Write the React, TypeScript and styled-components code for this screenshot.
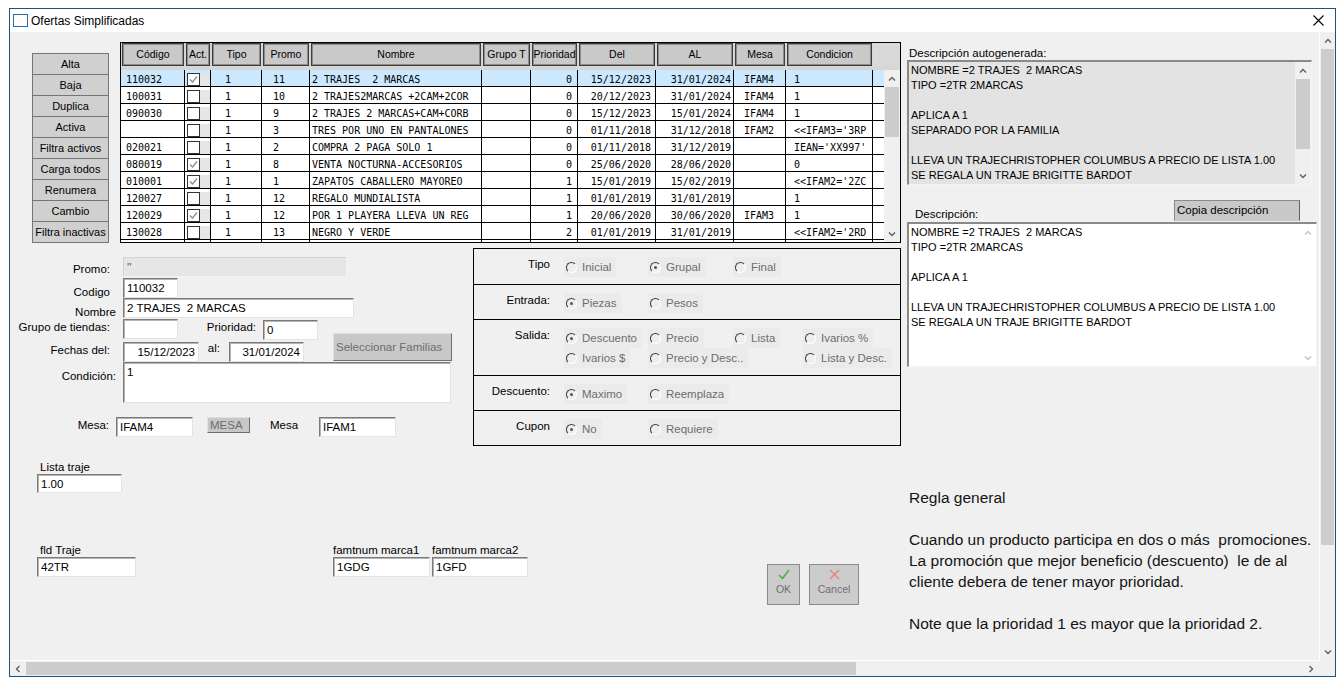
import React from 'react';
import styled, { createGlobalStyle } from 'styled-components';

const UI = '"Liberation Sans", Arial, sans-serif';
const MONO = '"DejaVu Sans Mono", "Liberation Mono", monospace';

const GlobalStyle = createGlobalStyle`
  html, body { margin: 0; padding: 0; background: #ffffff; }
  body { font-family: ${UI}; font-size: 11.5px; color: #000; }
  #root { padding: 8px 0 0 9px; }
  * { box-sizing: border-box; }
`;

const Window = styled.div`
  width: 1327px;
  height: 669px;
  border: 1px solid #1d5181;
  background: #f0f0f0;
  display: flex;
  flex-direction: column;
  overflow: hidden;
`;

const TitleBar = styled.div`
  height: 23px;
  flex-shrink: 0;
  background: #fff;
  display: flex;
  align-items: center;
  padding: 0 11px 0 3px;
`;

const TitleIcon = styled.span`
  width: 15px;
  height: 13px;
  border: 1px solid #2a6bb0;
  background: #fff;
  margin-right: 3px;
`;

const TitleText = styled.span`
  flex: 1;
  font-size: 12px;
`;

const Client = styled.div`
  flex: 1;
  min-height: 0;
  display: grid;
  grid-template-columns: 1fr 16px;
  grid-template-rows: 1fr 16px;
`;

const Content = styled.div`
  display: grid;
  grid-template-columns: 897px 1fr;
  overflow: hidden;
  min-height: 0;
`;

/* ---------- scrollbars ---------- */

const VScroll = styled.div`
  display: flex;
  flex-direction: column;
  background: #f0f0f0;
  border-left: 1px solid #fff;
`;

const HScroll = styled.div`
  display: flex;
  background: #f0f0f0;
  border-top: 1px solid #fff;
`;

const Corner = styled.div`
  background: #f0f0f0;
`;

const ArrowBox = styled.div<{ $w?: number; $h?: number }>`
  width: ${(p) => (p.$w ? `${p.$w}px` : 'auto')};
  height: ${(p) => (p.$h ? `${p.$h}px` : 'auto')};
  flex-shrink: 0;
  display: flex;
  align-items: center;
  justify-content: center;
`;

const Thumb = styled.div<{ $size: number; $vertical?: boolean }>`
  background: #cdcdcd;
  flex-shrink: 0;
  ${(p) =>
    p.$vertical
      ? `height: ${p.$size}px; margin: 0 1px;`
      : `width: ${p.$size}px; margin: 1px 0;`}
`;

const Track = styled.div`
  flex: 1;
`;

type Dir = 'up' | 'down' | 'left' | 'right';

function Chevron({ dir, color = '#606060' }: { dir: Dir; color?: string }) {
  const pts = {
    up: '1,5.5 4,2.5 7,5.5',
    down: '1,2.5 4,5.5 7,2.5',
    left: '5.5,1 2.5,4 5.5,7',
    right: '2.5,1 5.5,4 2.5,7',
  }[dir];
  return (
    <svg width="8" height="8" viewBox="0 0 8 8">
      <polyline points={pts} fill="none" stroke={color} strokeWidth="1.4" />
    </svg>
  );
}

/* ---------- left pane ---------- */

const LeftPane = styled.div`
  display: flex;
  flex-direction: column;
`;

const TopRow = styled.div`
  display: flex;
  align-items: flex-start;
  gap: 11px;
  padding: 10px 0 0 22px;
`;

const SideButtons = styled.div`
  width: 77px;
  margin-top: 11px;
  display: flex;
  flex-direction: column;
`;

const SideButton = styled.div`
  height: 22px;
  border: 1px solid #767676;
  background: #d0d0d0;
  text-align: center;
  font-size: 11px;
  line-height: 20px;
  & + & {
    margin-top: -1px;
  }
`;

const cols = [
  { w: 64, title: 'Código', align: 'left', pad: 5 },
  { w: 26, title: 'Act.', align: 'left', pad: 2 },
  { w: 51, title: 'Tipo', align: 'left', pad: 14 },
  { w: 48, title: 'Promo', align: 'left', pad: 11 },
  { w: 172, title: 'Nombre', align: 'left', pad: 2 },
  { w: 49, title: 'Grupo T', align: 'left', pad: 2 },
  { w: 47, title: 'Prioridad', align: 'right', pad: 5 },
  { w: 78, title: 'Del', align: 'right', pad: 4 },
  { w: 78, title: 'AL', align: 'right', pad: 2 },
  { w: 52, title: 'Mesa', align: 'left', pad: 10 },
  { w: 87, title: 'Condicion', align: 'left', pad: 8 },
];

const template = cols.map((c) => `${c.w}px`).join(' ') + ' 1fr';

type Row = [string, boolean, string, string, string, string, string, string, string, string, string];

const rows: Row[] = [
  ['110032', true, '1', '11', '2 TRAJES  2 MARCAS', '', '0', '15/12/2023', '31/01/2024', 'IFAM4', '1'],
  ['100031', false, '1', '10', '2 TRAJES2MARCAS +2CAM+2COR', '', '0', '20/12/2023', '31/01/2024', 'IFAM4', '1'],
  ['090030', false, '1', '9', '2 TRAJES 2 MARCAS+CAM+CORB', '', '0', '15/12/2023', '15/01/2024', 'IFAM4', '1'],
  ['', false, '1', '3', 'TRES POR UNO EN PANTALONES', '', '0', '01/11/2018', '31/12/2018', 'IFAM2', "<<IFAM3='3RP"],
  ['020021', false, '1', '2', 'COMPRA 2 PAGA SOLO 1', '', '0', '01/11/2018', '31/12/2019', '', "IEAN='XX997'"],
  ['080019', true, '1', '8', 'VENTA NOCTURNA-ACCESORIOS', '', '0', '25/06/2020', '28/06/2020', '', '0'],
  ['010001', true, '1', '1', 'ZAPATOS CABALLERO MAYOREO', '', '1', '15/01/2019', '15/02/2019', '', "<<IFAM2='2ZC"],
  ['120027', false, '1', '12', 'REGALO MUNDIALISTA', '', '1', '01/01/2019', '31/01/2019', '', '1'],
  ['120029', true, '1', '12', 'POR 1 PLAYERA LLEVA UN REG', '', '1', '20/06/2020', '30/06/2020', 'IFAM3', '1'],
  ['130028', false, '1', '13', 'NEGRO Y VERDE', '', '2', '01/01/2019', '31/01/2019', '', "<<IFAM2='2RD"],
  ['', false, '', '', '', '', '', '', '', '', ''],
];

const GridBox = styled.div`
  width: 781px;
  height: 201px;
  border: 1px solid #000;
  display: flex;
  flex-direction: column;
  overflow: hidden;
  background: #f0f0f0;
`;

const GridHeader = styled.div`
  height: 27px;
  flex-shrink: 0;
  display: grid;
  grid-template-columns: ${template} 16px;
  align-items: start;
  background: #d6d6d6;
`;

const HeaderCell = styled.div`
  height: 23px;
  margin: 0 1px;
  border: 1px solid #3c3c3c;
  box-shadow: inset 1px 1px 0 #8c8c8c, inset -1px -1px 0 #8c8c8c;
  background: #c9c9c9;
  font-size: 10.5px;
  line-height: 21px;
  text-align: center;
  white-space: nowrap;
  overflow: hidden;
`;

const HeaderFill = styled.div`
  height: 23px;
  background: #d9d9d9;
`;

const GridBody = styled.div`
  flex: 1;
  min-height: 0;
  display: flex;
`;

const RowsArea = styled.div`
  flex: 1;
  overflow: hidden;
  background: #fff;
`;

const DataRow = styled.div<{ $sel?: boolean }>`
  height: 17px;
  display: grid;
  grid-template-columns: ${template};
  border-bottom: 1px solid #000;
  background: ${(p) => (p.$sel ? '#cce8ff' : '#fff')};
`;

const Cell = styled.div<{ $align: string; $pad: number }>`
  border-right: 1px solid #000;
  overflow: hidden;
  white-space: pre;
  font-family: ${MONO};
  font-size: 10px;
  line-height: 17px;
  padding-top: 1px;
  text-align: ${(p) => p.$align};
  ${(p) => (p.$align === 'right' ? `padding-right: ${p.$pad}px;` : `padding-left: ${p.$pad}px;`)}
`;

const CheckWrap = styled.div`
  display: flex;
  margin-top: 2px;
`;

const CheckBox = styled.span`
  width: 13px;
  height: 13px;
  border: 1px solid #333;
  background: #fff;
  display: flex;
  align-items: center;
  justify-content: center;
`;

const CheckStrip = styled.span`
  width: 10px;
  height: 13px;
  background: #e6e6e6;
`;

const GridScroll = styled.div`
  width: 16px;
  display: flex;
  flex-direction: column;
  background: #f0f0f0;
`;

/* ---------- form ---------- */

const MiddleRow = styled.div`
  display: flex;
  align-items: flex-start;
`;

const FormArea = styled.div`
  width: 463px;
  padding-top: 14px;
  display: flex;
  flex-direction: column;
`;

const FormRow = styled.div<{ $h: number; $mt?: number }>`
  display: flex;
  align-items: flex-start;
  height: ${(p) => p.$h}px;
  margin-top: ${(p) => p.$mt ?? 0}px;
`;

const Label = styled.div<{ $w?: number; $dy?: number; $ml?: number; $left?: boolean }>`
  width: ${(p) => (p.$w ? `${p.$w}px` : 'auto')};
  flex-shrink: 0;
  text-align: ${(p) => (p.$left ? 'left' : 'right')};
  padding-top: ${(p) => p.$dy ?? 0}px;
  margin-left: ${(p) => p.$ml ?? 0}px;
  line-height: 13px;
  white-space: nowrap;
`;

const Field = styled.div<{ $w: number; $h?: number; $ml?: number; $mt?: number; $off?: boolean; $right?: boolean }>`
  width: ${(p) => p.$w}px;
  height: ${(p) => p.$h ?? 20}px;
  margin-left: ${(p) => p.$ml ?? 0}px;
  margin-top: ${(p) => p.$mt ?? 0}px;
  flex-shrink: 0;
  background: ${(p) => (p.$off ? '#e6e6e6' : '#fff')};
  border: 1px solid;
  border-color: ${(p) => (p.$off ? '#d4d4d4 #f4f4f4 #f4f4f4 #d4d4d4' : '#7a7a7a #e3e3e3 #e3e3e3 #7a7a7a')};
  box-shadow: ${(p) => (p.$off ? 'none' : 'inset 1px 1px 0 #b4b4b4')};
  color: ${(p) => (p.$off ? '#555' : '#000')};
  padding: 2px 3px 0;
  line-height: 14px;
  text-align: ${(p) => (p.$right ? 'right' : 'left')};
  white-space: pre;
  overflow: hidden;
`;

const RowsBlock = styled.div`
  display: flex;
  align-items: flex-start;
`;

const RowsColumn = styled.div`
  width: 323px;
  display: flex;
  flex-direction: column;
`;

const GreyButton = styled.div<{ $w: number; $h: number; $mt?: number; $ml?: number }>`
  width: ${(p) => p.$w}px;
  height: ${(p) => p.$h}px;
  margin-top: ${(p) => p.$mt ?? 0}px;
  margin-left: ${(p) => p.$ml ?? 0}px;
  flex-shrink: 0;
  background: #c8c8c8;
  border: 1px solid;
  border-color: #e0e0e0 #6f6f6f #6f6f6f #e0e0e0;
  color: #6d6d6d;
  font-size: 11.5px;
  line-height: 14px;
  padding: 0 2px;
  white-space: nowrap;
  overflow: hidden;
  display: flex;
  align-items: center;
`;

/* ---------- radio panel ---------- */

const RadioPanel = styled.div`
  width: 428px;
  margin-top: 5px;
  border: 1px solid #000;
  display: flex;
  flex-direction: column;
`;

const RadioRow = styled.div<{ $h: number }>`
  height: ${(p) => p.$h}px;
  display: grid;
  grid-template-columns: 76px 1fr;
  column-gap: 14px;
  align-items: start;
  padding-top: 8px;
  & + & {
    border-top: 1px solid #000;
  }
`;

const RadioLabel = styled.div`
  text-align: right;
  padding-top: 1px;
  line-height: 13px;
`;

const Options = styled.div`
  display: grid;
  grid-template-columns: 84px 85px 70px auto;
  align-items: center;
`;

const Option = styled.div<{ $col?: number }>`
  grid-column: ${(p) => p.$col ?? 'auto'};
  justify-self: start;
  height: 20px;
  display: inline-flex;
  align-items: center;
  padding: 0 5px 0 2px;
  background: #ebebeb;
  color: #6d6d6d;
  white-space: nowrap;
`;

const RadioDot = styled.span<{ $on?: boolean }>`
  width: 11px;
  height: 11px;
  border-radius: 50%;
  border: 1px solid;
  border-color: #3a3a3a #ffffff #ffffff #3a3a3a;
  background: #eeeeee;
  margin-right: 5px;
  display: inline-flex;
  align-items: center;
  justify-content: center;
  &::after {
    content: '';
    width: 3px;
    height: 3px;
    border-radius: 50%;
    background: ${(p) => (p.$on ? '#555' : 'transparent')};
  }
`;

/* ---------- bottom ---------- */

const BottomArea = styled.div`
  display: flex;
  flex-direction: column;
  padding-left: 27px;
`;

const SmallLabel = styled.div<{ $mt?: number; $pl?: number }>`
  margin-top: ${(p) => p.$mt ?? 0}px;
  padding-left: ${(p) => p.$pl ?? 0}px;
  line-height: 14px;
  height: 14px;
  white-space: nowrap;
`;

const BottomRow = styled.div`
  display: flex;
  align-items: flex-start;
  margin-top: 50px;
`;

const FieldGroup = styled.div<{ $w?: number; $ml?: number }>`
  width: ${(p) => (p.$w ? `${p.$w}px` : 'auto')};
  margin-left: ${(p) => p.$ml ?? 0}px;
  flex-shrink: 0;
  display: flex;
  flex-direction: column;
`;

const ActionButtons = styled.div`
  display: flex;
  gap: 9px;
  margin: 21px 0 0 239px;
`;

const ActionButton = styled.div<{ $w: number }>`
  width: ${(p) => p.$w}px;
  height: 41px;
  background: #cccccc;
  border: 1px solid #8a8a8a;
  display: flex;
  flex-direction: column;
  align-items: center;
  padding-top: 4px;
  gap: 3px;
  color: #707070;
  font-size: 10.5px;
`;

/* ---------- right pane ---------- */

const RightPane = styled.div`
  display: flex;
  flex-direction: column;
  padding-top: 14px;
`;

const TextBox = styled.div<{ $w: number; $h: number; $bg: string }>`
  width: ${(p) => p.$w}px;
  height: ${(p) => p.$h}px;
  flex-shrink: 0;
  background: ${(p) => p.$bg};
  border: 1px solid;
  border-width: 2px 1px 1px 2px;
  border-color: #8a8a8a #f4f4f4 #f4f4f4 #8a8a8a;
  display: flex;
`;

const TextLines = styled.div`
  flex: 1;
  padding: 1px 2px 0;
  font-size: 11px;
  line-height: 15px;
  white-space: pre;
  overflow: hidden;
`;

const BoxScroll = styled.div<{ $track: string }>`
  width: 16px;
  display: flex;
  flex-direction: column;
  background: ${(p) => p.$track};
`;

const DescHead = styled.div`
  height: 37px;
  display: flex;
  align-items: flex-end;
`;

const DescLabel = styled.div`
  padding: 0 0 1px 8px;
  line-height: 14px;
`;

const CopyButton = styled.div`
  width: 126px;
  height: 21px;
  margin: 0 19px 1px auto;
  background: #c8c8c8;
  border: 1px solid;
  border-color: #8a8a8a #5f5f5f #c8c8c8 #8a8a8a;
  padding: 2px 2px 0;
  line-height: 14px;
`;

const RuleText = styled.div`
  margin-top: 120px;
  padding-left: 2px;
  font-size: 15.5px;
  line-height: 21px;
  color: #141414;
  white-space: pre;
`;

const autoText = [
  'NOMBRE =2 TRAJES  2 MARCAS',
  'TIPO =2TR 2MARCAS',
  '',
  'APLICA A 1',
  'SEPARADO POR LA FAMILIA',
  '',
  'LLEVA UN TRAJECHRISTOPHER COLUMBUS A PRECIO DE LISTA 1.00',
  'SE REGALA UN TRAJE BRIGITTE BARDOT',
].join('\n');

const descText = [
  'NOMBRE =2 TRAJES  2 MARCAS',
  'TIPO =2TR 2MARCAS',
  '',
  'APLICA A 1',
  '',
  'LLEVA UN TRAJECHRISTOPHER COLUMBUS A PRECIO DE LISTA 1.00',
  'SE REGALA UN TRAJE BRIGITTE BARDOT',
].join('\n');

const ruleText = [
  'Regla general',
  '',
  'Cuando un producto participa en dos o más  promociones.',
  'La promoción que mejor beneficio (descuento)  le de al',
  'cliente debera de tener mayor prioridad.',
  '',
  'Note que la prioridad 1 es mayor que la prioridad 2.',
].join('\n');

const sideButtons = ['Alta', 'Baja', 'Duplica', 'Activa', 'Filtra activos', 'Carga todos', 'Renumera', 'Cambio', 'Filtra inactivas'];

function Check() {
  return (
    <svg width="9" height="9" viewBox="0 0 9 9">
      <polyline points="1,4.5 3.5,7 8,1.5" fill="none" stroke="#8a8a8a" strokeWidth="1.2" />
    </svg>
  );
}

function Radio({ label, on, col }: { label: string; on?: boolean; col?: number }) {
  return (
    <Option $col={col}>
      <RadioDot $on={on} />
      {label}
    </Option>
  );
}

export default function App() {
  return (
    <>
      <GlobalStyle />
      <Window>
        <TitleBar>
          <TitleIcon />
          <TitleText>Ofertas Simplificadas</TitleText>
          <svg width="11" height="11" viewBox="0 0 11 11">
            <path d="M0.5 0.5 L10.5 10.5 M10.5 0.5 L0.5 10.5" stroke="#000" strokeWidth="1.1" />
          </svg>
        </TitleBar>
        <Client>
          <Content>
            <LeftPane>
              <TopRow>
                <SideButtons>
                  {sideButtons.map((b) => (
                    <SideButton key={b}>{b}</SideButton>
                  ))}
                </SideButtons>
                <GridBox>
                  <GridHeader>
                    {cols.map((c) => (
                      <HeaderCell key={c.title}>{c.title}</HeaderCell>
                    ))}
                    <HeaderFill />
                    <HeaderFill />
                  </GridHeader>
                  <GridBody>
                    <RowsArea>
                      {rows.map((r, i) => (
                        <DataRow key={i} $sel={i === 0}>
                          {r.map((v, j) =>
                            j === 1 ? (
                              <Cell key={j} $align="left" $pad={2}>
                                {i < 10 && (
                                  <CheckWrap>
                                    <CheckBox>{v && <Check />}</CheckBox>
                                    <CheckStrip />
                                  </CheckWrap>
                                )}
                              </Cell>
                            ) : (
                              <Cell key={j} $align={cols[j].align} $pad={cols[j].pad}>
                                {v as string}
                              </Cell>
                            )
                          )}
                          <div />
                        </DataRow>
                      ))}
                    </RowsArea>
                    <GridScroll>
                      <ArrowBox $h={17}>
                        <Chevron dir="up" />
                      </ArrowBox>
                      <Thumb $vertical $size={50} />
                      <Track />
                      <ArrowBox $h={17}>
                        <Chevron dir="down" />
                      </ArrowBox>
                    </GridScroll>
                  </GridBody>
                </GridBox>
              </TopRow>

              <MiddleRow>
                <FormArea>
                  <FormRow $h={21}>
                    <Label $w={100} $dy={6}>Promo:</Label>
                    <Field $w={224} $ml={13} $off>''</Field>
                  </FormRow>
                  <FormRow $h={20}>
                    <Label $w={100} $dy={8}>Codigo</Label>
                    <Field $w={55} $ml={13}>110032</Field>
                  </FormRow>
                  <FormRow $h={21}>
                    <Label $w={106} $dy={8}>Nombre</Label>
                    <Field $w={231} $ml={7}>2 TRAJES  2 MARCAS</Field>
                  </FormRow>
                  <RowsBlock>
                    <RowsColumn>
                      <FormRow $h={23}>
                        <Label $w={100} $dy={2}>Grupo de tiendas:</Label>
                        <Field $w={55} $ml={13}></Field>
                        <Label $w={78} $dy={2}>Prioridad:</Label>
                        <Field $w={55} $ml={7} $mt={1}>0</Field>
                      </FormRow>
                      <FormRow $h={20}>
                        <Label $w={100} $dy={2}>Fechas del:</Label>
                        <Field $w={76} $ml={13} $right>15/12/2023</Field>
                        <Label $w={21} $dy={0}>al:</Label>
                        <Field $w={75} $ml={9} $right>31/01/2024</Field>
                      </FormRow>
                    </RowsColumn>
                    <GreyButton $w={119} $h={28} $mt={14}>Seleccionar Familias</GreyButton>
                  </RowsBlock>
                  <FormRow $h={41}>
                    <Label $w={106} $dy={8}>Condición:</Label>
                    <Field $w={328} $h={41} $ml={7}>1</Field>
                  </FormRow>
                  <FormRow $h={20} $mt={14}>
                    <Label $w={99} $dy={2}>Mesa:</Label>
                    <Field $w={77} $ml={7}>IFAM4</Field>
                    <GreyButton $w={43} $h={16} $ml={14}>MESA</GreyButton>
                    <Label $w={27} $dy={2} $ml={20} $left>Mesa</Label>
                    <Field $w={77} $ml={22}>IFAM1</Field>
                  </FormRow>
                </FormArea>

                <RadioPanel>
                  <RadioRow $h={35}>
                    <RadioLabel>Tipo</RadioLabel>
                    <Options>
                      <Radio label="Inicial" />
                      <Radio label="Grupal" on />
                      <Radio label="Final" />
                    </Options>
                  </RadioRow>
                  <RadioRow $h={35}>
                    <RadioLabel>Entrada:</RadioLabel>
                    <Options>
                      <Radio label="Piezas" on />
                      <Radio label="Pesos" />
                    </Options>
                  </RadioRow>
                  <RadioRow $h={56}>
                    <RadioLabel>Salida:</RadioLabel>
                    <Options>
                      <Radio label="Descuento" on />
                      <Radio label="Precio" />
                      <Radio label="Lista" />
                      <Radio label="Ivarios %" />
                      <Radio label="Ivarios $" col={1} />
                      <Radio label="Precio y Desc.." col={2} />
                      <Radio label="Lista y Desc." col={4} />
                    </Options>
                  </RadioRow>
                  <RadioRow $h={35}>
                    <RadioLabel>Descuento:</RadioLabel>
                    <Options>
                      <Radio label="Maximo" on />
                      <Radio label="Reemplaza" />
                    </Options>
                  </RadioRow>
                  <RadioRow $h={35}>
                    <RadioLabel>Cupon</RadioLabel>
                    <Options>
                      <Radio label="No" on />
                      <Radio label="Requiere" />
                    </Options>
                  </RadioRow>
                </RadioPanel>
              </MiddleRow>

              <BottomArea>
                <SmallLabel $mt={14} $pl={3}>Lista traje</SmallLabel>
                <Field $w={85} $h={19}>1.00</Field>
                <BottomRow>
                  <FieldGroup $w={296}>
                    <SmallLabel $pl={3}>fld Traje</SmallLabel>
                    <Field $w={99}>42TR</Field>
                  </FieldGroup>
                  <FieldGroup>
                    <SmallLabel>famtnum marca1</SmallLabel>
                    <Field $w={97}>1GDG</Field>
                  </FieldGroup>
                  <FieldGroup $ml={2}>
                    <SmallLabel>famtnum marca2</SmallLabel>
                    <Field $w={96}>1GFD</Field>
                  </FieldGroup>
                  <ActionButtons>
                    <ActionButton $w={33}>
                      <svg width="12" height="11" viewBox="0 0 12 11">
                        <polyline points="1,6 4.5,9.5 11,1" fill="none" stroke="#4fae4f" strokeWidth="1.6" />
                      </svg>
                      OK
                    </ActionButton>
                    <ActionButton $w={50}>
                      <svg width="11" height="11" viewBox="0 0 11 11">
                        <path d="M1 1 L10 10 M10 1 L1 10" stroke="#e58080" strokeWidth="1.3" />
                      </svg>
                      Cancel
                    </ActionButton>
                  </ActionButtons>
                </BottomRow>
              </BottomArea>
            </LeftPane>

            <RightPane>
              <SmallLabel $pl={2}>Descripción autogenerada:</SmallLabel>
              <TextBox $w={405} $h={125} $bg="#e3e3e3">
                <TextLines>{autoText}</TextLines>
                <BoxScroll $track="#f0f0f0">
                  <ArrowBox $h={17}>
                    <Chevron dir="up" />
                  </ArrowBox>
                  <Thumb $vertical $size={70} />
                  <Track />
                  <ArrowBox $h={17}>
                    <Chevron dir="down" />
                  </ArrowBox>
                </BoxScroll>
              </TextBox>
              <DescHead>
                <DescLabel>Descripción:</DescLabel>
                <CopyButton>Copia descripción</CopyButton>
              </DescHead>
              <TextBox $w={410} $h={145} $bg="#ffffff">
                <TextLines>{descText}</TextLines>
                <BoxScroll $track="#ffffff">
                  <ArrowBox $h={17}>
                    <Chevron dir="up" color="#c4c4c4" />
                  </ArrowBox>
                  <Track />
                  <ArrowBox $h={17}>
                    <Chevron dir="down" color="#c4c4c4" />
                  </ArrowBox>
                </BoxScroll>
              </TextBox>
              <RuleText>{ruleText}</RuleText>
            </RightPane>
          </Content>

          <VScroll>
            <ArrowBox $h={17}>
              <Chevron dir="up" />
            </ArrowBox>
            <Thumb $vertical $size={496} />
            <Track />
            <ArrowBox $h={17}>
              <Chevron dir="down" />
            </ArrowBox>
          </VScroll>
          <HScroll>
            <ArrowBox $w={16}>
              <Chevron dir="left" />
            </ArrowBox>
            <Thumb $size={830} />
            <Track />
            <ArrowBox $w={16}>
              <Chevron dir="right" />
            </ArrowBox>
          </HScroll>
          <Corner />
        </Client>
      </Window>
    </>
  );
}
